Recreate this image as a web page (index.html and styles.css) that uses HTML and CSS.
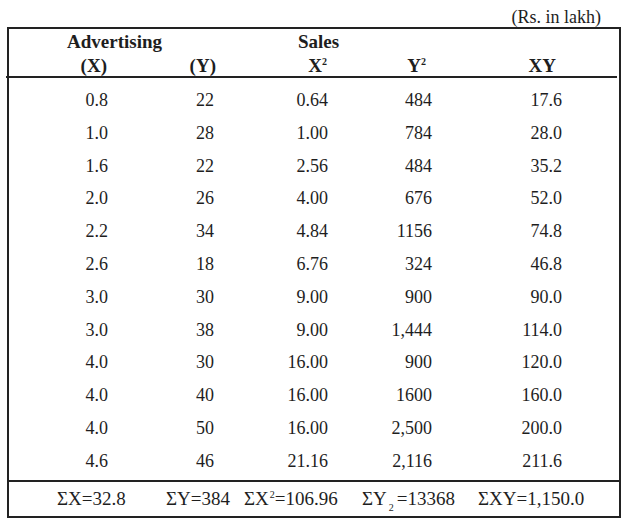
FILE: index.html
```html
<!DOCTYPE html>
<html>
<head>
<meta charset="utf-8">
<link rel="stylesheet" href="styles.css">
</head>
<body>
<p class="unit">(Rs. in lakh)</p>
<div class="sheet">
  <div class="head">
    <div class="head-top">
      <span>Advertising</span>
      <span>Sales</span>
    </div>
    <div class="cols head-cols">
      <span class="h1">(X)</span>
      <span class="h2">(Y)</span>
      <span class="h3">X<sup>2</sup></span>
      <span class="h4">Y<sup>2</sup></span>
      <span class="h5">XY</span>
    </div>
  </div>
  <div class="data">
    <div class="cols"><span>0.8</span><span>22</span><span>0.64</span><span>484</span><span>17.6</span></div>
    <div class="cols"><span>1.0</span><span>28</span><span>1.00</span><span>784</span><span>28.0</span></div>
    <div class="cols"><span>1.6</span><span>22</span><span>2.56</span><span>484</span><span>35.2</span></div>
    <div class="cols"><span>2.0</span><span>26</span><span>4.00</span><span>676</span><span>52.0</span></div>
    <div class="cols"><span>2.2</span><span>34</span><span>4.84</span><span>1156</span><span>74.8</span></div>
    <div class="cols"><span>2.6</span><span>18</span><span>6.76</span><span>324</span><span>46.8</span></div>
    <div class="cols"><span>3.0</span><span>30</span><span>9.00</span><span>900</span><span>90.0</span></div>
    <div class="cols"><span>3.0</span><span>38</span><span>9.00</span><span>1,444</span><span>114.0</span></div>
    <div class="cols"><span>4.0</span><span>30</span><span>16.00</span><span>900</span><span>120.0</span></div>
    <div class="cols"><span>4.0</span><span>40</span><span>16.00</span><span>1600</span><span>160.0</span></div>
    <div class="cols"><span>4.0</span><span>50</span><span>16.00</span><span>2,500</span><span>200.0</span></div>
    <div class="cols"><span>4.6</span><span>46</span><span>21.16</span><span>2,116</span><span>211.6</span></div>
  </div>
  <div class="foot">
    <span>&Sigma;X=32.8</span>
    <span>&Sigma;Y=384</span>
    <span>&Sigma;X<sup>2</sup>=106.96</span>
    <span>&Sigma;Y<sub>2</sub>=13368</span>
    <span>&Sigma;XY=1,150.0</span>
  </div>
</div>
</body>
</html>
```
FILE: styles.css
```css
body {
  margin: 0;
  background: #ffffff;
  color: #1e1e1e;
  font-family: "Liberation Serif", "Times New Roman", serif;
}

.unit {
  margin: 0;
  padding: 7px 24px 0 0;
  text-align: right;
  font-size: 18px;
  line-height: 20px;
}

.sheet {
  margin: 0 0 0 7px;
  width: 610px;
  border: 2px solid #222;
}

.head {
  margin: 0 2px 0 -3px;
  padding: 2px 0 0 3px;
  border-bottom: 2px solid #222;
  font-weight: bold;
  font-size: 19px;
}

.head-top {
  display: grid;
  grid-template-columns: 231px auto;
  padding-left: 58px;
  line-height: 22px;
}

.cols {
  display: grid;
  grid-template-columns: 99px 106px 114px 104px 130px;
  justify-items: end;
}

.head-cols {
  margin-top: 2px;
  line-height: 21px;
}

.head-cols .h1 { margin-right: 1px; }
.head-cols .h2 { margin-right: -2px; }
.head-cols .h3 { margin-right: 1px; }
.head-cols .h4 { margin-right: 6px; }
.head-cols .h5 { margin-right: 6px; }

sup, sub {
  font-size: 10px;
  line-height: 0;
}

sup { vertical-align: 7px; }
sub { vertical-align: -6px; }

.data {
  padding: 6px 0 2px;
  font-size: 18px;
  line-height: 32.8px;
}

.foot {
  display: grid;
  grid-template-columns: 109px 78px 118px 116px auto;
  padding-left: 48px;
  border-top: 2px solid #222;
  font-size: 19px;
  line-height: 34px;
}

.foot sup { margin-left: 1px; }
.foot sub { margin: 0 3px 0 2px; }
```
